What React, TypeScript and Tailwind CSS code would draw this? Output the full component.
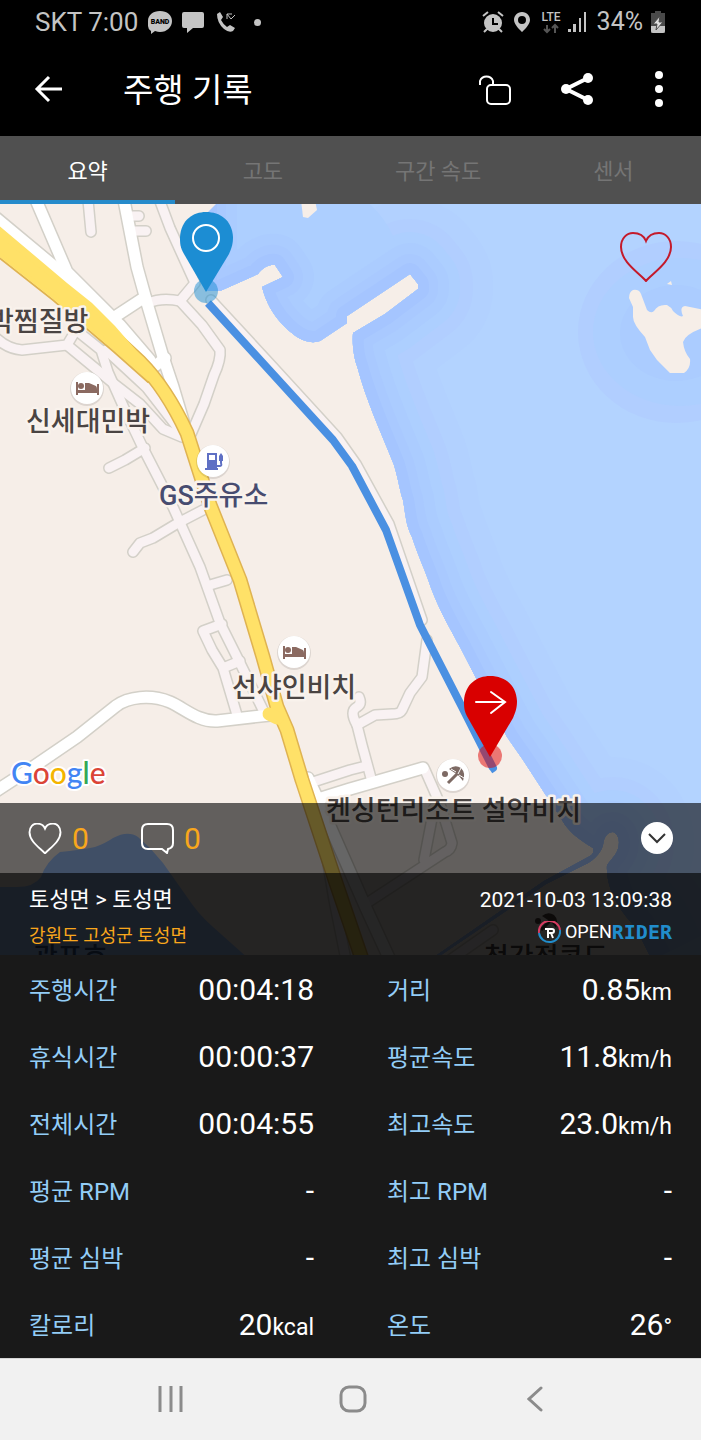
import type { ReactNode } from "react";

interface Stat {
    label: string,
    value: string,
    unit?: string,
}

const tabs = ["요약", "고도", "구간 속도", "센서"];

const stats: Stat[] = [
    { label: "주행시간", value: "00:04:18" },
    { label: "거리", value: "0.85", unit: "km" },
    { label: "휴식시간", value: "00:00:37" },
    { label: "평균속도", value: "11.8", unit: "km/h" },
    { label: "전체시간", value: "00:04:55" },
    { label: "최고속도", value: "23.0", unit: "km/h" },
    { label: "평균 RPM", value: "-" },
    { label: "최고 RPM", value: "-" },
    { label: "평균 심박", value: "-" },
    { label: "최고 심박", value: "-" },
    { label: "칼로리", value: "20", unit: "kcal" },
    { label: "온도", value: "26", unit: "°" },
];

const HEART = "M26 49C19 41 1 30 1 15C1 6 7 1 13 1C19 1 24 4 26 9C28 4 33 1 39 1C45 1 51 6 51 15C51 30 33 41 26 49Z";

const COAST = "M206 190V291L220 291L258 274C262 268 270 264 275 265L283 277L262 287C266 302 272 314 285 327C296 338 308 345 320 341L347 323V316L410 274L418 284V289L385 314L353 333C352 345 354 358 357 366C366 400 380 430 394 465C399 482 400 492 403 500C406 518 406 525 412 537C418 556 426 572 431 588C440 612 452 632 460 647L477 680L507 737L523 760L547 797L562 820C568 831 577 838 593 848C594 852 593 854 590 856L544 881L437 955H441L546 884L584 865C596 860 602 850 603 845C604 836 608 832 613 832C620 834 621 846 615 855L607 865C606 880 612 895 617 903C624 916 632 922 637 930L652 960";

const SEA = `${COAST}H720V190Z`;

const majorRoads = [
    "M36 200L67 272L113 318L145 297",
    "M-4 218L67 277L120 325L150 360",
    "M124 200L137 267L147 303L163 357L173 387L187 434",
    "M150 370L165 358",
    "M-4 791L33 767L77 737L116 706C128 697 150 694 170 702C184 708 198 722 217 721L270 715",
    "M318 799L350 789L423 768",
    "M308 778L322 808L344 858L366 908L390 960",
];

const minorRoads = [
    "M88 200L91 232",
    "M130 216H139M132 231H146",
    "M158 196L170 228L195 283L180 301Q162 297 148 303",
    "M180 301L202 325L220 350Q221 360 214 375L204 404L191 434",
    "M-4 338Q8 349 22 350L67 345L76 330L101 350L108 372L124 408L143 448L163 487L173 507L200 567L220 623L240 663L264 712",
    "M67 345L113 383L140 404L163 429L182 437",
    "M106 350Q130 372 147 388L178 428",
    "M145 448L125 460L109 468",
    "M133 552L140 543L153 538L178 523L203 510",
    "M210 585L227 580",
    "M222 624L203 631L212 650L223 668L237 715M223 668L240 661",
    "M427 640L422 677L410 693L402 710Q400 714 392 714L375 715L357 725",
    "M359 697Q362 704 357 707Q349 711 357 725L362 745L371 778",
    "M310 783L350 770L366 766",
    "M425 770L440 804L452 843Q451 850 445 852L367 903",
    "M434 808L424 860",
    "M324 840L334 900L346 960",
    "M493 930L450 960",
    "M211 300L272 366L337 437L356 464L389 524L422 620",
];

const YELLOW = "M-6 240L67 297L113 337L140 362Q166 388 187 433L210 505L240 580L263 657L277 707L287 730L302 780L335 880L364 965";
const YELLOW_WEST = "M-4 223L67 283L92 303L115 326L142 357L160 382L148 381L113 350L53 299L-4 254Z";
const ROUTE = "M208 303L333 440L352 466L386 530L420 625L462 707L493 768L490 770";

const mapLabels = [
    { text: "박찜질방", x: -11, y: 331 },
    { text: "신세대민박", x: 26, y: 431 },
    { text: "선샤인비치", x: 232, y: 697 },
    { text: "켄싱턴리조트 설악비치", x: 326, y: 820 },
    { text: "청간정콘도", x: 484, y: 967 },
];

const BedPoi = ({ x, y }: { x: number, y: number }) => (
    <g transform={`translate(${x} ${y})`}>
        <circle cy="1" r="17" fill="#000" opacity=".1" />
        <circle r="16" fill="#fff" />
        <path d="M-11 -6H-9V2H10V-4H12V7H10V5H-9V7H-11ZM-2 -5H2L9 -2Q10 -1 10 1V3H-2Z" fill="#8b6a61" />
        <circle cx="-6" cy="-2" r="3" fill="#8b6a61" />
    </g>
);

const RideMap = () => (
    <svg viewBox="0 204 701 751" preserveAspectRatio="xMidYMin slice" className="absolute inset-0 h-full w-full" role="img" aria-label="주행 경로 지도">
        <defs>
            <clipPath id="sea">
                <path d={SEA} />
            </clipPath>
        </defs>
        <rect y="204" width="701" height="760" fill="#f6eee8" />

        <g clipPath="url(#sea)">
            <rect y="190" width="720" height="780" fill="#b3d3ff" />
            <g fill="none" strokeLinejoin="round">
                <path d={COAST} stroke="#b2d1ff" strokeWidth="150" />
                <path d={COAST} stroke="#b1ceff" strokeWidth="110" />
                <path d={COAST} stroke="#adcfff" strokeWidth="84" />
                <ellipse cx="300" cy="270" rx="100" ry="92" fill="#adcfff" />
                <path d={COAST} stroke="#abccff" strokeWidth="62" />
                <path d={COAST} stroke="#a9c9ff" strokeWidth="40" />
                <path d={COAST} stroke="#a5c5ff" strokeWidth="22" />
            </g>
            <ellipse cx="676" cy="332" rx="98" ry="91" fill="#b1ceff" />
            <ellipse cx="680" cy="332" rx="87" ry="74" fill="#adcfff" />
            <ellipse cx="676" cy="333" rx="56" ry="48" fill="#abccff" />
            <path d="M301 200L303 217L308 218L317 210L315 200Z" fill="#f6eee8" />
            <path d="M633 290Q639 289 641 294L644 302L647 310Q651 314 654 311Q658 304 667 305Q671 307 673 311Q680 318 683 316Q679 307 685 306L705 310V327Q685 334 683 342Q684 352 690 359Q691 368 684 373H670L657 360L650 350L645 337Q633 324 633 317V307L629 298Q629 292 633 290Z" fill="#f6eee8" />
            <path d="M667 284L671 281L672 285Z" fill="#f6eee8" />
        </g>
        <path d="M-2 887H17Q34 887 41 877Q46 862 60 852Q80 850 95 847Q106 843 113 838Q128 830 138 837L150 848L163 863L187 897Q198 914 213 927L250 960H-2Z" fill="#a1c5ff" />
        <path d="M206 200H220L206 214Z" fill="#f6eee8" />

        <g fill="none" strokeLinecap="round" strokeLinejoin="round">
            {minorRoads.map(d => <path key={d} d={d} stroke="#d3d0c8" strokeWidth="12" />)}
            {majorRoads.map(d => <path key={d} d={d} stroke="#d3d0c8" strokeWidth="14" />)}
            {minorRoads.map(d => <path key={d} d={d} stroke="#f9f2f3" strokeWidth="9" />)}
            {majorRoads.map(d => <path key={d} d={d} stroke="#fff" strokeWidth="11" />)}
            <path d="M-4 255L53 300L113 351L148 382" stroke="#dfb352" strokeWidth="2" />
            <path d={YELLOW} stroke="#dfb352" strokeWidth="15" />
            <path d={YELLOW_WEST} fill="#ffe168" stroke="none" />
            <path d={YELLOW} stroke="#ffe168" strokeWidth="12" />
            <path d="M269 714L277 718" stroke="#ffe168" strokeWidth="13" />
            <path d={ROUTE} stroke="#4a90e2" strokeWidth="8" strokeLinecap="butt" />
        </g>

        <BedPoi x={87} y={388} />
        <BedPoi x={294} y={652} />
        <g transform="translate(213 461)">
            <circle cy="1" r="17" fill="#000" opacity=".1" />
            <circle r="16" fill="#fff" />
            <path d="M-6 -8H4V7H5V9H-8V7H-6ZM-4 -6V-1H2V-6Z" fill="#5f70c4" fillRule="evenodd" />
            <path d="M4 5H7Q9 5 8 2V-6M8 -5V0" fill="none" stroke="#5f70c4" strokeWidth="2" />
            <path d="M6 -5L8 -8L10 -5V0H6Z" fill="#5f70c4" />
        </g>
        <g transform="translate(453 775)">
            <circle cy="1" r="17" fill="#000" opacity=".1" />
            <circle r="16" fill="#fff" />
            <circle cx="-8" cy="-1" r="3" fill="#7d6a64" />
            <path d="M-5 8L6 -3" stroke="#7d6a64" strokeWidth="3" />
            <path d="M-4 -6Q2 -11 8 -7Q13 -2 10 6L6 1L2 -2Z" fill="#7d6a64" />
            <path d="M-2 -6L3 -3M8 -7L5 -1M11 3L6 0" stroke="#fff" strokeWidth="1" />
        </g>
        <g transform="translate(546 922)">
            <circle cx="-8" cy="-1" r="3" fill="#51433f" />
            <path d="M-5 8L6 -3" stroke="#51433f" strokeWidth="3" />
            <path d="M-4 -6Q2 -11 8 -7Q13 -2 10 6L6 1L2 -2Z" fill="#51433f" />
        </g>

        <g fontSize="27" fontWeight="500" stroke="#f9f2ec" strokeWidth="5" strokeLinejoin="round" fill="#4a4442" className="[paint-order:stroke]">
            {mapLabels.map(({ text, x, y }) => <text key={text} x={x} y={y}>{text}</text>)}
            <text x="159" y="505" fill="#474c70">GS주유소</text>
            <text x="33" y="967" fill="#30527f" stroke="none">광포호</text>
        </g>
        <text x="11" y="784" fontSize="30" fontWeight="500" stroke="#fff" strokeWidth="4" strokeLinejoin="round" className="font-[Lato,sans-serif] [paint-order:stroke]">
            <tspan fill="#4285f4">G</tspan>
            <tspan fill="#db4437">o</tspan>
            <tspan fill="#f4b400">o</tspan>
            <tspan fill="#4285f4">g</tspan>
            <tspan fill="#34a853">l</tspan>
            <tspan fill="#db4437">e</tspan>
        </text>

        <circle cx="206" cy="291" r="12" fill="#1c8dd3" opacity=".5" />
        <path d="M206 292L184 254C180 247 180 243 180 237C181 220 193 212 206 212C220 212 232 220 233 237C233 243 232 247 229 254Z" fill="#1c8dd3" />
        <circle cx="206" cy="238" r="13" fill="none" stroke="#fff" strokeWidth="2" />
        <circle cx="490" cy="756" r="12" fill="#e00000" opacity=".5" />
        <path d="M490 757L468 718C464 711 464 707 464 701C465 684 477 676 490 676C504 676 516 684 517 701C517 707 516 711 513 718Z" fill="#d90000" />
        <path d="M476 702H504M491 692L505 702L491 713" fill="none" stroke="#fff" strokeWidth="2" strokeLinecap="round" />
    </svg>
);

const StatusBar = () => (
    <div className="flex h-11 items-center justify-between pr-9 pl-[35px] text-[25px] text-[#c4c4c4]">
        <div className="flex items-center">
            <span className="text-[26px]">SKT 7:00</span>
            <svg className="ml-2.5" width="24" height="24" viewBox="0 0 24 24">
                <path d="M12 1C5 1 0 5 0 11V16Q0 19 3 21V24L7 21Q10 22 12 22C19 22 24 17 24 11S19 1 12 1Z" fill="#c4c4c4" />
                <text x="12" y="14" fontSize="7" fontWeight="900" textAnchor="middle">BAND</text>
            </svg>
            <svg className="ml-2.5" width="22" height="22" viewBox="0 0 22 22" fill="#c4c4c4">
                <path d="M2 1H20Q22 1 22 3V15Q22 17 20 17H11L5 22V17H2Q0 17 0 15V3Q0 1 2 1Z" />
            </svg>
            <svg className="ml-3" width="20" height="20" viewBox="0 0 20 20">
                <path d="M1 2L4 0L7 5L5 8Q7 12 11 15L14 13L19 16L17 19Q13 21 8 17Q1 11 1 2Z" fill="#c4c4c4" />
                <path d="M11 7V2H16M11 2L15 7L19 3" fill="none" stroke="#c4c4c4" strokeWidth="1" />
            </svg>
            <span className="ml-[18px] h-[7px] w-[7px] rounded-full bg-[#c4c4c4]" />
        </div>
        <div className="flex items-center">
            <svg width="22" height="22" viewBox="0 0 22 22">
                <circle cx="11" cy="12" r="9" fill="#c4c4c4" />
                <path d="M1 5L6 1M16 1L21 5M5 18L2 21M17 18L20 21" stroke="#c4c4c4" strokeWidth="2" />
                <path d="M11 7V13H16" fill="none" stroke="#000" strokeWidth="2" />
            </svg>
            <svg className="ml-2.5" width="16" height="20" viewBox="0 0 16 20">
                <path d="M8 0C3 0 0 4 0 8C0 13 8 20 8 20S16 13 16 8C16 4 13 0 8 0ZM8 4A4 4 0 1 1 8 12A4 4 0 1 1 8 4Z" fill="#c4c4c4" fillRule="evenodd" />
            </svg>
            <svg className="ml-2.5" width="22" height="24" viewBox="0 0 22 24">
                <text x="11" y="11" fontSize="12" fontWeight="500" textAnchor="middle" fill="#c4c4c4">LTE</text>
                <path d="M7 15V22M4 19L7 22L10 19M15 23V15M12 18L15 15L18 18" fill="none" stroke="#555" strokeWidth="2" />
            </svg>
            <svg className="ml-1.5" width="19" height="20" viewBox="0 0 19 20" fill="#c4c4c4">
                <path d="M0 17H3V20H0ZM5 12H8V20H5ZM11 6H13V20H11ZM16 0H18V20H16Z" />
            </svg>
            <span className="ml-2.5">34%</span>
            <svg className="ml-2" width="14" height="22" viewBox="0 0 14 22">
                <path d="M4 0H10V2H14V22H0V2H4Z" fill="#4a4a4a" />
                <path d="M0 15H14V20Q14 22 12 22H2Q0 22 0 20Z" fill="#c4c4c4" />
                <path d="M9 5L2 13H6L5 19L12 11H8Z" fill="#ddd" stroke="#4a4a4a" strokeWidth="1" />
            </svg>
        </div>
    </div>
);

const IconButton = ({ label, className = "", children }: { label: string, className?: string, children: ReactNode }) => (
    <button type="button" aria-label={label} className={`flex cursor-pointer items-center justify-center ${className}`}>
        {children}
    </button>
);

const AppBar = () => (
    <header className="flex h-[92px] items-center pr-[22px] pb-[3px] pl-7 text-white">
        <IconButton label="뒤로" className="h-10 w-10">
            <svg width="28" height="28" viewBox="0 0 28 28" fill="none" stroke="currentColor" strokeWidth="3">
                <path d="M28 14H3M15 2L3 14L15 26" />
            </svg>
        </IconButton>
        <h1 className="ml-[55px] flex-1 pt-1 text-[33px]">주행 기록</h1>
        <div className="flex gap-[42px]">
            <IconButton label="잠금 해제" className="h-10 w-10">
                <svg width="32" height="32" viewBox="0 0 32 32" fill="none" stroke="currentColor" strokeWidth="2">
                    <rect x="8" y="12" width="23" height="19" rx="4" />
                    <path d="M1 12V8A7 7 0 0 1 14 8V12" />
                </svg>
            </IconButton>
            <IconButton label="공유" className="h-10 w-10">
                <svg width="32" height="32" viewBox="0 0 32 32" fill="currentColor">
                    <path d="M27 5L5 16L27 27" fill="none" stroke="currentColor" strokeWidth="4" />
                    <circle cx="5" cy="16" r="5" />
                    <circle cx="27" cy="5" r="5" />
                    <circle cx="27" cy="27" r="5" />
                </svg>
            </IconButton>
            <IconButton label="더보기" className="h-10 w-10">
                <svg width="8" height="36" viewBox="0 0 8 36" fill="currentColor">
                    <circle cx="4" cy="4" r="4" />
                    <circle cx="4" cy="18" r="4" />
                    <circle cx="4" cy="32" r="4" />
                </svg>
            </IconButton>
        </div>
    </header>
);

const TabBar = () => (
    <nav role="tablist" className="grid h-[68px] grid-cols-4 bg-[#505050] text-[22px]">
        {tabs.map((name, i) => (
            <button
                key={name}
                type="button"
                role="tab"
                aria-selected={i === 0}
                className={`cursor-pointer border-b-4 pt-1.5 ${i === 0 ? "border-[#268bcb] text-white" : "border-transparent text-[#757575]"}`}>
                {name}
            </button>
        ))}
    </nav>
);

const OpenRider = () => (
    <div className="flex items-center text-lg leading-6">
        <svg className="mr-1" width="23" height="23" viewBox="0 0 23 23" fill="none">
            <path d="M1 12A10 10 0 0 1 22 9" stroke="#d63d62" strokeWidth="2" />
            <path d="M22 9A10 10 0 1 1 1 12" stroke="#218dcc" strokeWidth="2" />
            <path d="M7 8H14Q16 8 16 10T14 12H10M10 9V17M13 12L15 17" stroke="#fff" strokeWidth="2" />
        </svg>
        <span className="text-white">OPEN</span>
        <span className="font-['DejaVu_Sans_Mono',monospace] text-xl leading-6 font-bold text-[#218dcc]">RIDER</span>
    </div>
);

const NavBar = () => (
    <nav className="flex h-[82px] items-center justify-between border-t border-[#d5d5d5] bg-[#f1f1f1] pr-[146px] pb-0.5 pl-[150px] text-[#8b8b8b]">
        <IconButton label="최근 앱" className="h-10 w-10">
            <svg width="25" height="26" viewBox="0 0 25 26" stroke="currentColor" strokeWidth="3">
                <path d="M2 0V26M13 0V26M23 0V26" />
            </svg>
        </IconButton>
        <IconButton label="홈" className="h-10 w-10">
            <svg width="28" height="28" viewBox="0 0 28 28" fill="none" stroke="currentColor" strokeWidth="3">
                <rect x="2" y="2" width="24" height="24" rx="8" />
            </svg>
        </IconButton>
        <IconButton label="이전" className="h-10 w-10">
            <svg width="16" height="26" viewBox="0 0 16 26" fill="none" stroke="currentColor" strokeWidth="3" strokeLinecap="round">
                <path d="M14 2L2 13L14 24" />
            </svg>
        </IconButton>
    </nav>
);

export default function App() {
    return (
        <div className="flex min-h-screen flex-col bg-black font-[Roboto,'Noto_Sans_CJK_KR',sans-serif]">
            <StatusBar />
            <AppBar />
            <TabBar />
            <main className="flex-1 bg-[#191919]">
                <section className="relative flex min-h-[751px] flex-col justify-between overflow-hidden">
                    <RideMap />
                    <div className="relative flex justify-end pt-7 pr-7">
                        <IconButton label="관심 코스">
                            <svg width="54" height="50" viewBox="-1 0 54 50" fill="none" stroke="#c41a2b" strokeWidth="2">
                                <path d={HEART} />
                            </svg>
                        </IconButton>
                    </div>
                    <div className="relative">
                        <div className="flex h-[70px] items-center bg-black/60 px-7 text-[30px] text-[#f9a71c]">
                            <button type="button" aria-label="좋아요 0" className="flex cursor-pointer items-center gap-2.5">
                                <svg width="34" height="31" viewBox="-1 0 54 50" fill="none" stroke="#fff" strokeWidth="3">
                                    <path d={HEART} />
                                </svg>
                                0
                            </button>
                            <button type="button" aria-label="댓글 0" className="ml-[52px] flex cursor-pointer items-center gap-2.5">
                                <svg width="33" height="31" viewBox="0 0 33 31" fill="none" stroke="#fff" strokeWidth="2">
                                    <path d="M7 1H26Q32 1 32 7V20Q32 25 27 26L26 30L21 26H7Q1 26 1 20V7Q1 1 7 1Z" />
                                </svg>
                                0
                            </button>
                            <IconButton label="접기" className="ml-auto h-8 w-8 rounded-full bg-white">
                                <svg width="18" height="12" viewBox="0 0 18 12" fill="none" stroke="#333" strokeWidth="2">
                                    <path d="M1 2L9 10L17 2" />
                                </svg>
                            </IconButton>
                        </div>
                        <div className="flex h-[82px] justify-between bg-black/85 px-[29px] pt-[11px]">
                            <div>
                                <p className="text-[22px] leading-8 text-white">토성면 &gt; 토성면</p>
                                <p className="pt-1 text-lg leading-8 text-[#f9a71c]">강원도 고성군 토성면</p>
                            </div>
                            <div className="flex flex-col items-end">
                                <time className="text-[21px] leading-8 text-white">2021-10-03 13:09:38</time>
                                <div className="pt-1">
                                    <OpenRider />
                                </div>
                            </div>
                        </div>
                    </div>
                </section>
                <dl className="grid grid-cols-2 gap-x-[73px] px-[29px] pb-px">
                    {stats.map(({ label, value, unit }) => (
                        <div key={label} className="flex h-[67px] items-center justify-between pt-0.5">
                            <dt className="pt-0.5 text-2xl text-[#93cdf7]">{label}</dt>
                            <dd className="text-[30px] text-white">
                                {value}
                                {unit && <span className="text-[23px]">{unit}</span>}
                            </dd>
                        </div>
                    ))}
                </dl>
            </main>
            <NavBar />
        </div>
    );
}
